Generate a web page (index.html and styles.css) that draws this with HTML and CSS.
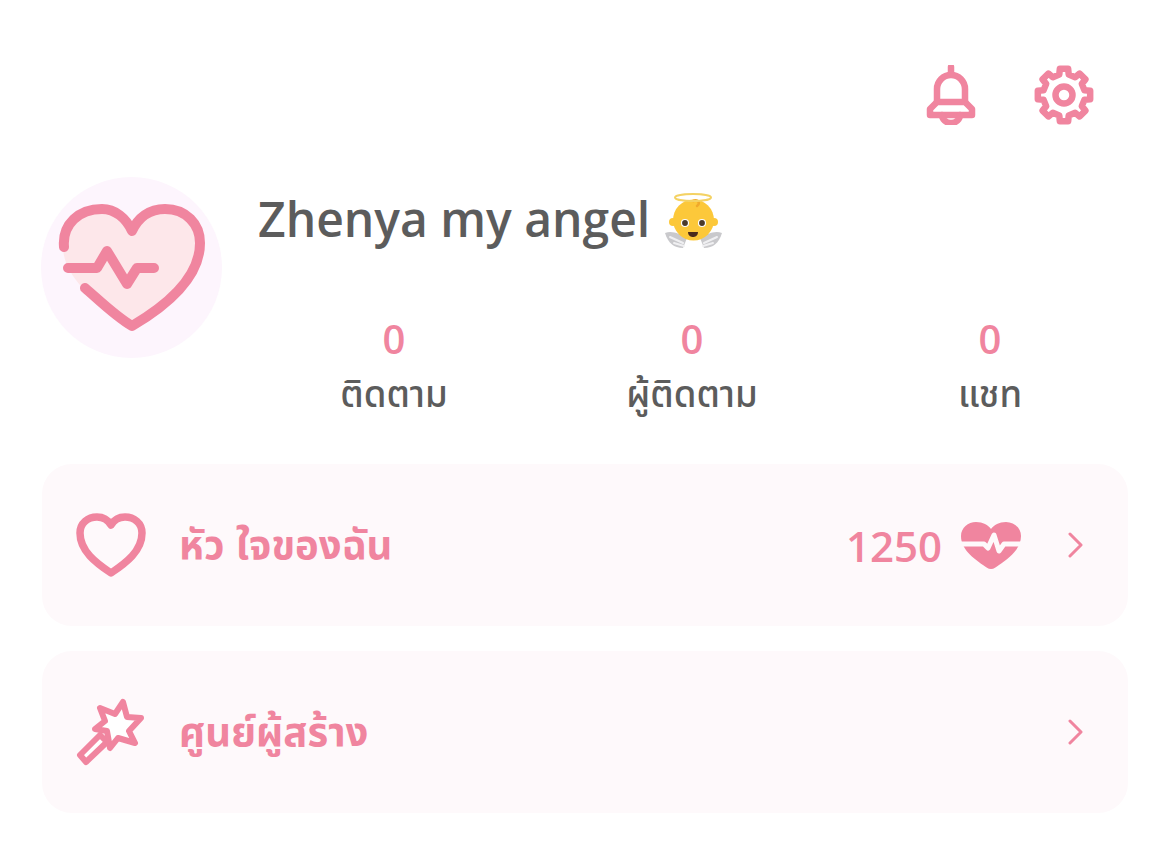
FILE: index.html
```html
<!DOCTYPE html>
<html lang="th">
<head>
    <meta charset="UTF-8">
    <meta name="viewport" content="width=device-width, initial-scale=1.0">
    <title>Profile</title>
    <link rel="stylesheet" href="styles.css">
</head>
<body>

<div class="top-bar">
    <svg class="top-icon" viewBox="0 0 52 60">
        <path d="M26 2v7M12 37V24a14 14 0 0 1 28 0v13"/>
        <path d="M12 37H40L47 44V50H5V44Z"/>
        <path d="M17 50a9 8 0 0 0 18 0"/>
    </svg>
    <svg class="top-icon gear" viewBox="0 0 60 60">
        <polygon points="50.46,25.28 56.17,25.85 56.17,34.15 50.46,34.72 47.81,41.13 51.44,45.58 45.58,51.44 41.13,47.81 34.72,50.46 34.15,56.17 25.85,56.17 25.28,50.46 18.87,47.81 14.42,51.44 8.56,45.58 12.19,41.13 9.54,34.72 3.83,34.15 3.83,25.85 9.54,25.28 12.19,18.87 8.56,14.42 14.42,8.56 18.87,12.19 25.28,9.54 25.85,3.83 34.15,3.83 34.72,9.54 41.13,12.19 45.58,8.56 51.44,14.42 47.81,18.87"/>
        <circle cx="30" cy="30" r="8.5"/>
    </svg>
</div>

<div class="profile">
    <div class="avatar">
        <svg viewBox="0 0 181 181">
            <path class="heart-fill" d="M22 70C22 47 38 32 61 32C74 32 85 41 91 54C97 41 108 32 124 32C145 32 159 47 159 66C159 101 125 129 91 149C60 131 22 101 22 70Z"/>
            <path class="heart-line" d="M23 70C21 47 38 32 61 32C74 32 85 41 91 54C97 41 108 32 124 32C145 32 159 47 159 66C159 101 125 129 91 149C74 139 58 123 44 111"/>
            <path class="heart-line" d="M27 91H56L66 74L86 107L96 91H113"/>
        </svg>
    </div>
    <div class="profile-info">
        <div class="name">
            Zhenya my angel
            <svg class="emoji" viewBox="0 0 60 56">
                <path class="wing" d="M1 40C8 37 16 41 23 45L19 55C10 55 4 50 1 40Z"/>
                <path class="wing" d="M58 40C51 37 43 41 36 45L40 55C49 55 55 50 58 40Z"/>
                <path class="feather" d="M6 44L19 50M10 50L20 53M53 44L40 50M49 50L39 53"/>
                <circle class="ear" cx="9" cy="29" r="4"/>
                <circle class="ear" cx="50" cy="29" r="4"/>
                <circle class="face" cx="29.5" cy="27" r="20.5"/>
                <path class="curl" d="M29 8C34 6 37 10 33 13"/>
                <ellipse class="halo" cx="29" cy="4.5" rx="18" ry="3.5"/>
                <circle class="eye" cx="21" cy="30" r="3.5"/>
                <circle class="eye" cx="38" cy="30" r="3.5"/>
                <path class="mouth" d="M24 39H34C34 43 31 44 29 44C27 44 24 43 24 39Z"/>
            </svg>
        </div>
        <div class="stats">
            <div class="stat">
                <div class="stat-num">0</div>
                <div class="stat-label">ติดตาม</div>
            </div>
            <div class="stat">
                <div class="stat-num">0</div>
                <div class="stat-label">ผู้ติดตาม</div>
            </div>
            <div class="stat">
                <div class="stat-num">0</div>
                <div class="stat-label">แชท</div>
            </div>
        </div>
    </div>
</div>

<div class="card">
    <svg class="card-icon" viewBox="0 0 70 64">
        <path d="M35 60C20 50 4 38 4 20C4 10 12 4 21 4C27 4 32 7 35 12C38 7 43 4 49 4C58 4 66 10 66 20C66 38 50 50 35 60Z"/>
    </svg>
    <div class="card-title">หัว ใจของฉัน</div>
    <div class="card-value">1250</div>
    <svg class="points-icon" viewBox="0 0 60 47">
        <path class="points-heart" d="M30 47C27 47 25 45 22 43C12 36 0 27 0 14C0 6 7 0 15 0C22 0 27 3 30 7C33 3 38 0 45 0C53 0 60 6 60 14C60 27 48 36 38 43C35 45 33 47 30 47Z"/>
        <path class="points-pulse" d="M0 22H23L27 26L33 13L38 29L43 22H60"/>
    </svg>
    <svg class="chevron" viewBox="0 0 15 26">
        <path d="M2 2L13 13L2 24"/>
    </svg>
</div>

<div class="card">
    <svg class="card-icon wand" viewBox="0 0 70 68">
        <polygon points="47,4 51,19 65,20 53,33 59,45 42,40 34,50 31,33 19,31 29,23 24,10 39,16"/>
        <polygon points="4,57 10,64 31,44 24,37"/>
    </svg>
    <div class="card-title">ศูนย์ผู้สร้าง</div>
    <svg class="chevron" viewBox="0 0 15 26">
        <path d="M2 2L13 13L2 24"/>
    </svg>
</div>

</body>
</html>
```

FILE: styles.css
```css
body {
    font-family: "Open Sans", "Noto Sans", "Noto Sans Thai", sans-serif;
    background-color: #fff;
    color: #5c5c5c;
    margin: 0;
    padding: 65px 41px 0;
    height: 850px;
    box-sizing: border-box;
    overflow: hidden;
}
svg {
    display: block;
    flex: none;
    fill: none;
    stroke: #f0859f;
    stroke-linecap: round;
    stroke-linejoin: round;
}
.top-bar {
    display: flex;
    justify-content: flex-end;
    gap: 57px;
    padding-right: 34px;
}
.top-icon {
    width: 52px;
    height: 60px;
    stroke-width: 6.5;
}
.top-icon.gear {
    width: 60px;
    stroke-width: 6.5;
}
.profile {
    display: flex;
    gap: 36px;
    margin-top: 52px;
}
.avatar {
    width: 181px;
    height: 181px;
    border-radius: 50%;
    background: #fdf5fd;
    flex: none;
}
.heart-fill {
    fill: #fde7ea;
    stroke: none;
}
.heart-line {
    stroke-width: 10;
}
.profile-info {
    flex: 1;
}
.name {
    display: flex;
    align-items: center;
    gap: 14px;
    font-size: 48px;
    font-weight: 600;
    line-height: 60px;
    margin-top: 12px;
}
.emoji {
    width: 60px;
    height: 56px;
    stroke: none;
    margin-top: 3px;
}
.wing {
    fill: #c9c9cc;
}
.feather {
    stroke: #f0f0f2;
    stroke-width: 2;
}
.ear,
.face {
    fill: #fcc83a;
}
.curl {
    stroke: #f0a92c;
    stroke-width: 2.5;
}
.halo {
    stroke: #f4d264;
    stroke-width: 2;
}
.eye {
    fill: #4b3a2a;
    stroke: #fff;
    stroke-width: 1.2;
}
.mouth {
    fill: #4a2a1c;
}
.stats {
    display: grid;
    grid-template-columns: repeat(3, 298px);
    margin: 65px 0 0 -13px;
    text-align: center;
}
.stat-num {
    font-size: 40px;
    font-weight: 600;
    line-height: 50px;
    color: #f0859f;
}
.stat-label {
    font-size: 36.5px;
    font-weight: 500;
    line-height: 59px;
}
.card {
    display: flex;
    align-items: center;
    height: 162px;
    margin-left: 1px;
    margin-bottom: 25px;
    padding: 0 45px 0 34px;
    border-radius: 30px;
    background: #fef9fb;
    box-sizing: border-box;
}
.profile + .card {
    margin-top: 41px;
}
.card-icon {
    width: 70px;
    height: 64px;
    stroke-width: 7.5;
    margin-right: 33px;
}
.card-icon.wand {
    height: 68px;
    fill: #fff;
    stroke-width: 6;
}
.card-title {
    flex: 1;
    font-size: 40px;
    font-weight: 700;
    word-spacing: 1px;
    padding-top: 3px;
    color: #f0859f;
}
.card-value {
    font-size: 42px;
    font-weight: 600;
    color: #f0859f;
    margin-right: 19px;
}
.points-icon {
    width: 60px;
    height: 47px;
    stroke: none;
    margin-right: 47px;
}
.points-heart {
    fill: #f0859f;
}
.points-pulse {
    stroke: #fef9fb;
    stroke-width: 5;
    stroke-linecap: butt;
}
.chevron {
    width: 15px;
    height: 26px;
    stroke-width: 3;
}
```
